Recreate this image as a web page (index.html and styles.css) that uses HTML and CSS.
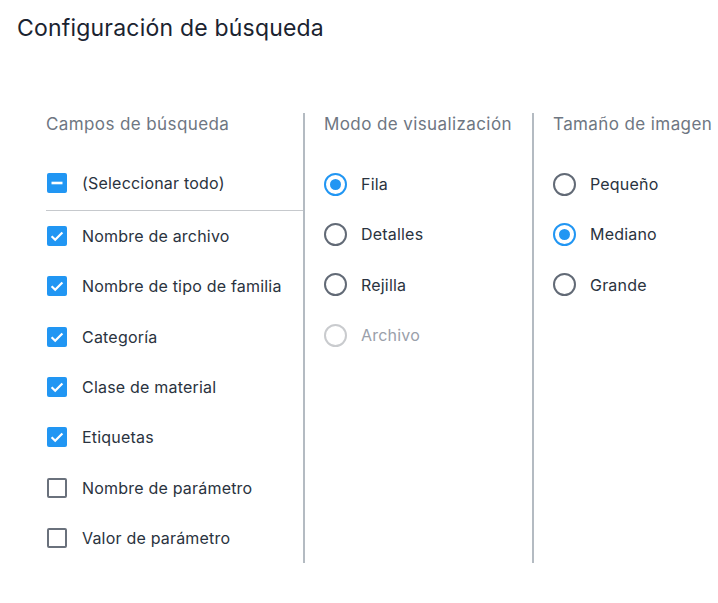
FILE: index.html
```html
<!DOCTYPE html>
<html lang="es">
<head>
<meta charset="utf-8">
<title>Configuración de búsqueda</title>
<link rel="stylesheet" href="styles.css">
</head>
<body>
<h1 class="title">Configuración de búsqueda</h1>
<div class="panel">
  <section class="col col-fields">
    <h2 class="col-head">Campos de búsqueda</h2>
    <div class="row row-all">
      <span class="cb cb-on"><svg viewBox="0 0 20 20" width="20" height="20"><path d="M4.5 10h11" stroke="#fff" stroke-width="2.6" stroke-linecap="butt"/></svg></span>
      <span class="lbl">(Seleccionar todo)</span>
    </div>
    <div class="sep"></div>
    <div class="row"><span class="cb cb-on"><svg viewBox="0 0 20 20" width="20" height="20"><path d="M4.6 10.2l3.6 3.6 7.2-7.4" fill="none" stroke="#fff" stroke-width="2.2"/></svg></span><span class="lbl">Nombre de archivo</span></div>
    <div class="row"><span class="cb cb-on"><svg viewBox="0 0 20 20" width="20" height="20"><path d="M4.6 10.2l3.6 3.6 7.2-7.4" fill="none" stroke="#fff" stroke-width="2.2"/></svg></span><span class="lbl">Nombre de tipo de familia</span></div>
    <div class="row"><span class="cb cb-on"><svg viewBox="0 0 20 20" width="20" height="20"><path d="M4.6 10.2l3.6 3.6 7.2-7.4" fill="none" stroke="#fff" stroke-width="2.2"/></svg></span><span class="lbl">Categoría</span></div>
    <div class="row"><span class="cb cb-on"><svg viewBox="0 0 20 20" width="20" height="20"><path d="M4.6 10.2l3.6 3.6 7.2-7.4" fill="none" stroke="#fff" stroke-width="2.2"/></svg></span><span class="lbl">Clase de material</span></div>
    <div class="row"><span class="cb cb-on"><svg viewBox="0 0 20 20" width="20" height="20"><path d="M4.6 10.2l3.6 3.6 7.2-7.4" fill="none" stroke="#fff" stroke-width="2.2"/></svg></span><span class="lbl">Etiquetas</span></div>
    <div class="row"><span class="cb cb-off"></span><span class="lbl">Nombre de parámetro</span></div>
    <div class="row"><span class="cb cb-off"></span><span class="lbl">Valor de parámetro</span></div>
  </section>
  <section class="col col-div">
    <h2 class="col-head">Modo de visualización</h2>
    <div class="list">
      <div class="row"><span class="rd rd-on"></span><span class="lbl">Fila</span></div>
      <div class="row"><span class="rd"></span><span class="lbl">Detalles</span></div>
      <div class="row"><span class="rd"></span><span class="lbl">Rejilla</span></div>
      <div class="row is-disabled"><span class="rd rd-dis"></span><span class="lbl">Archivo</span></div>
    </div>
  </section>
  <section class="col col-div">
    <h2 class="col-head">Tamaño de imagen</h2>
    <div class="list">
      <div class="row"><span class="rd"></span><span class="lbl">Pequeño</span></div>
      <div class="row"><span class="rd rd-on"></span><span class="lbl">Mediano</span></div>
      <div class="row"><span class="rd"></span><span class="lbl">Grande</span></div>
    </div>
  </section>
</div>
</body>
</html>
```
FILE: styles.css
```css
* { box-sizing: border-box; }
html, body { margin: 0; background: #fff; }
body {
  font-family: Inter, "Noto Sans", "Liberation Sans", sans-serif;
  color: #2a3340;
  width: 718px;
  height: 603px;
  overflow: hidden;
}
.title {
  margin: 0;
  padding: 13px 0 0 17px;
  font-size: 23px;
  line-height: 30px;
  font-weight: 400;
  color: #1b2330;
  letter-spacing: 0.2px;
}
.panel {
  display: grid;
  grid-template-columns: 257px 229px 1fr;
  margin: 70px 0 0 46px;
}
.col { display: flex; flex-direction: column; }
.col-div {
  border-left: 2px solid #b4bbc2;
  padding-left: 19px;
}
.col-head {
  margin: 0;
  font-size: 17px;
  line-height: 22px;
  font-weight: 400;
  color: #6e7682;
  letter-spacing: 0.4px;
  white-space: nowrap;
}
.col-fields .col-head { margin-bottom: 23px; }
.list { margin-top: 24px; }
.row {
  height: 50.33px;
  display: flex;
  align-items: center;
  white-space: nowrap;
}
.row-all { height: 50px; }
.sep {
  height: 1px;
  background: #c6c9cd;
  margin-top: 2px;
}
.lbl {
  font-size: 16px;
  letter-spacing: 0.2px;
  color: #2a3340;
}
.cb {
  width: 20px;
  height: 20px;
  border-radius: 2px;
  margin-left: 1px;
  margin-right: 15px;
  flex: none;
  display: block;
}
.cb svg { display: block; }
.cb-on { background: #2196f3; }
.cb-off { border: 2px solid #6a717c; }
.rd {
  width: 23px;
  height: 23px;
  border-radius: 50%;
  border: 2px solid #626a76;
  margin-right: 14px;
  flex: none;
  display: flex;
  align-items: center;
  justify-content: center;
}
.rd-on { border-color: #2196f3; }
.rd-on::after {
  content: "";
  width: 11px;
  height: 11px;
  border-radius: 50%;
  background: #2196f3;
}
.rd-dis { border-color: #c9cbce; }
.is-disabled .lbl { color: #9aa0aa; }
```
